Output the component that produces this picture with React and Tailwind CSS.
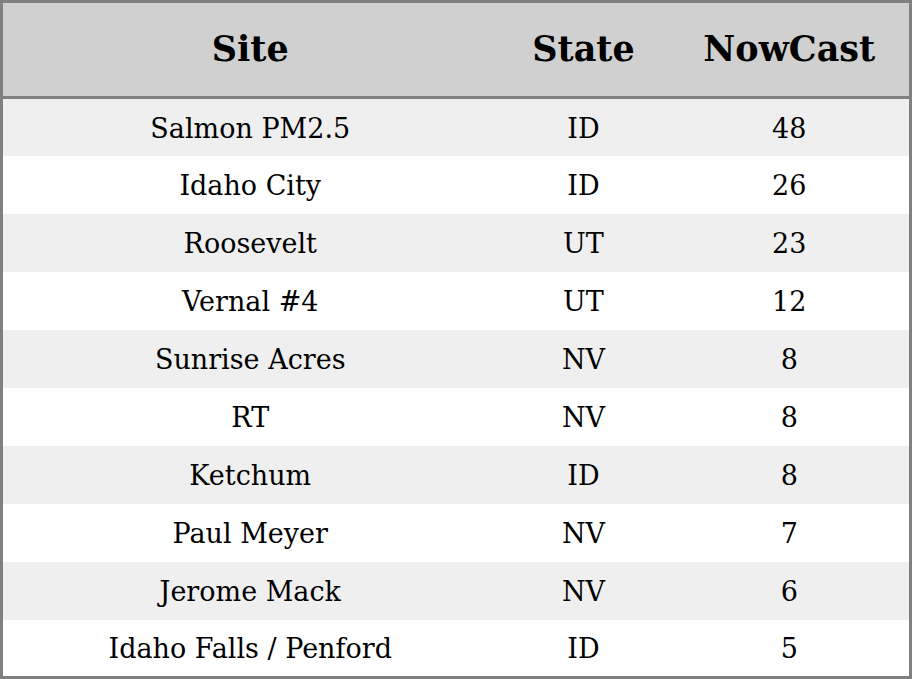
const rows = [
  ['Salmon PM2.5', 'ID', 48],
  ['Idaho City', 'ID', 26],
  ['Roosevelt', 'UT', 23],
  ['Vernal #4', 'UT', 12],
  ['Sunrise Acres', 'NV', 8],
  ['RT', 'NV', 8],
  ['Ketchum', 'ID', 8],
  ['Paul Meyer', 'NV', 7],
  ['Jerome Mack', 'NV', 6],
  ['Idaho Falls / Penford', 'ID', 5],
]

export default function App() {
  return (
    <div className="w-[912px] h-[679px] bg-white" style={{ fontFamily: '"DejaVu Serif", serif' }}>
      <table className="w-full border-collapse border-[3px] border-[#808080] text-black table-fixed">
        <colgroup>
          <col className="w-[496px]" />
          <col className="w-[172px]" />
          <col />
        </colgroup>
        <thead>
          <tr className="bg-[#d0d0d0] h-[96px] border-b-[3px] border-[#808080]">
            <th className="text-[35px] font-bold text-center">Site</th>
            <th className="text-[35px] font-bold text-center">State</th>
            <th className="text-[35px] font-bold text-center">NowCast</th>
          </tr>
        </thead>
        <tbody>
          {rows.map((r, i) => (
            <tr key={i} className={`h-[58px] ${i % 2 === 0 ? 'bg-[#efefef]' : 'bg-white'}`}>
              <td className="text-[27px] text-center pt-[3px]">{r[0]}</td>
              <td className="text-[27px] text-center pt-[3px]">{r[1]}</td>
              <td className="text-[27px] text-center pt-[3px]">{r[2]}</td>
            </tr>
          ))}
        </tbody>
      </table>
    </div>
  )
}
